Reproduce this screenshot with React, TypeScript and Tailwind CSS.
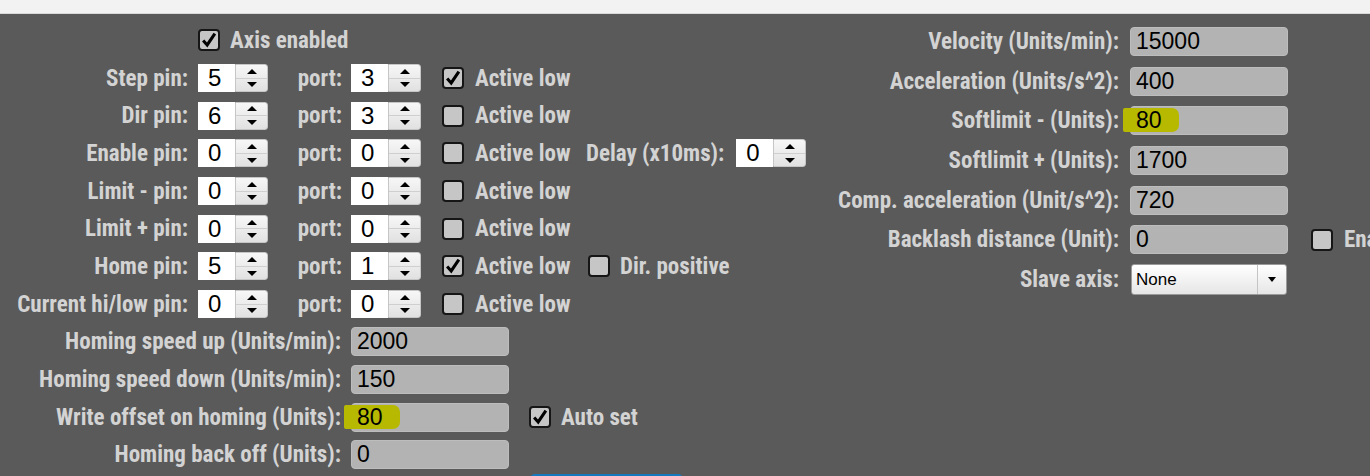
import React from "react";

const LABEL =
  "font-['Roboto_Condensed','Liberation_Sans_Narrow','Open_Sans','Noto_Sans',sans-serif] font-stretch-[75%] font-bold text-[23px] leading-none text-[#d3d3d3] whitespace-nowrap";
const VALUE = "font-['Liberation_Sans',Arial,sans-serif] text-[23px] leading-none text-black";

function Check({ checked }: { checked?: boolean }) {
  return (
    <div className="flex h-[22px] w-[22px] shrink-0 items-center justify-center rounded-[4px] border-2 border-[#161616] bg-[#c6c6c6]">
      {checked && (
        <svg viewBox="0 0 20 20" className="h-[18px] w-[18px]">
          <path d="M3.5 10.5 L8 15.5 L16.5 3" fill="none" stroke="#000" strokeWidth="3.4" strokeLinejoin="miter" />
        </svg>
      )}
    </div>
  );
}

function Spin({ value }: { value: string }) {
  return (
    <div className="flex h-[28px] shrink-0">
      <div className="flex w-[37px] items-center bg-white pl-[10px] font-['Liberation_Sans',Arial,sans-serif] text-[24px] leading-none text-black">
        {value}
      </div>
      <div className="flex w-[33px] flex-col rounded-r-[3px] border border-[#c6c6c6] bg-linear-to-b from-[#f7f7f7] to-[#e1e1e1]">
        <div className="flex flex-1 items-center justify-center border-b border-[#cfcfcf]">
          <div className="h-0 w-0 border-x-[5px] border-b-[5px] border-x-transparent border-b-black" />
        </div>
        <div className="flex flex-1 items-center justify-center">
          <div className="h-0 w-0 border-x-[5px] border-t-[5px] border-x-transparent border-t-black" />
        </div>
      </div>
    </div>
  );
}

function Field({ value, highlight }: { value: string; highlight?: boolean }) {
  return (
    <div className="relative flex h-[29px] w-[158px] shrink-0 items-center rounded-[4px] border border-[#bdbdbd] bg-[#b3b3b3] pl-[5px]">
      {highlight && (
        <span className="absolute left-[-8px] top-[1px] h-[24px] w-[56px] rounded-r-[7px] rounded-l-[2px] bg-[#b7b900]" />
      )}
      <span className={`relative ${VALUE}`}>{value}</span>
    </div>
  );
}

type PinRow = {
  label: string;
  pin: string;
  port: string;
  low: boolean;
  extra?: "delay" | "dir";
};

const pins: PinRow[] = [
  { label: "Step pin:", pin: "5", port: "3", low: true },
  { label: "Dir pin:", pin: "6", port: "3", low: false },
  { label: "Enable pin:", pin: "0", port: "0", low: false, extra: "delay" },
  { label: "Limit - pin:", pin: "0", port: "0", low: false },
  { label: "Limit + pin:", pin: "0", port: "0", low: false },
  { label: "Home pin:", pin: "5", port: "1", low: true, extra: "dir" },
  { label: "Current hi/low pin:", pin: "0", port: "0", low: false },
];

const homing = [
  { label: "Homing speed up (Units/min):", value: "2000" },
  { label: "Homing speed down (Units/min):", value: "150" },
  { label: "Write offset on homing (Units):", value: "80", highlight: true, auto: true },
  { label: "Homing back off (Units):", value: "0" },
];

const motion = [
  { label: "Velocity (Units/min):", value: "15000" },
  { label: "Acceleration (Units/s^2):", value: "400" },
  { label: "Softlimit - (Units):", value: "80", highlight: true },
  { label: "Softlimit + (Units):", value: "1700" },
  { label: "Comp. acceleration (Unit/s^2):", value: "720" },
  { label: "Backlash distance (Unit):", value: "0", enable: true },
];

export default function App() {
  return (
    <div className="flex h-[476px] w-[1370px] flex-col overflow-hidden bg-[#5a5a5a]">
      <div className="h-[14px] shrink-0 border-b border-[#d9d9d9] bg-[#f2f2f2]" />
      <div className="flex">
        {/* left column: pins and homing */}
        <div className="w-[830px] shrink-0 pt-[7.5px]">
          <div className="flex h-[37.7px] items-center pl-[198px]">
            <Check checked />
            <span className={`ml-[10px] ${LABEL}`}>Axis enabled</span>
          </div>
          {pins.map((row) => (
            <div key={row.label} className="flex h-[37.7px] items-center">
              <span className={`w-[188px] shrink-0 text-right ${LABEL}`}>{row.label}</span>
              <div className="ml-[10px]">
                <Spin value={row.pin} />
              </div>
              <span className={`w-[74px] shrink-0 text-right ${LABEL}`}>port:</span>
              <div className="ml-[9px]">
                <Spin value={row.port} />
              </div>
              <div className="ml-[21px] flex w-[144px] shrink-0 items-center">
                <Check checked={row.low} />
                <span className={`ml-[11px] ${LABEL}`}>Active low</span>
              </div>
              {row.extra === "delay" && (
                <>
                  <span className={LABEL}>Delay (x10ms):</span>
                  <div className="ml-[12px]">
                    <Spin value="0" />
                  </div>
                </>
              )}
              {row.extra === "dir" && (
                <div className="ml-[2px] flex items-center">
                  <Check />
                  <span className={`ml-[10px] ${LABEL}`}>Dir. positive</span>
                </div>
              )}
            </div>
          ))}
          {homing.map((row) => (
            <div key={row.label} className="flex h-[37.7px] items-center">
              <span className={`w-[341px] shrink-0 text-right ${LABEL}`}>{row.label}</span>
              <div className="ml-[10px]">
                <Field value={row.value} highlight={row.highlight} />
              </div>
              {row.auto && (
                <div className="ml-[20px] flex items-center">
                  <Check checked />
                  <span className={`ml-[10px] ${LABEL}`}>Auto set</span>
                </div>
              )}
            </div>
          ))}
          <div className="ml-[530px] h-[30px] w-[153px] rounded-t-[5px] bg-[#1779bd]" />
        </div>

        {/* right column: motion settings */}
        <div className="shrink-0 pt-[8px]">
          {motion.map((row) => (
            <div key={row.label} className="flex h-[39.6px] items-center">
              <span className={`w-[289px] shrink-0 text-right ${LABEL}`}>{row.label}</span>
              <div className="ml-[11px]">
                <Field value={row.value} highlight={row.highlight} />
              </div>
              {row.enable && (
                <div className="ml-[23px] flex items-center">
                  <Check />
                  <span className={`ml-[11px] ${LABEL}`}>Enabled</span>
                </div>
              )}
            </div>
          ))}
          <div className="flex h-[39.6px] items-center">
            <span className={`w-[289px] shrink-0 text-right ${LABEL}`}>Slave axis:</span>
            <div className="ml-[12px] flex h-[31px] w-[156px] items-stretch rounded-[3px] border border-[#9a9a9a] bg-linear-to-b from-white to-[#e6e6e6]">
              <span className="flex flex-1 items-center pl-[4px] font-['Liberation_Sans',Arial,sans-serif] text-[17px] leading-none text-black">
                None
              </span>
              <div className="flex w-[29px] items-center justify-center border-l border-[#c4c4c4]">
                <div className="h-0 w-0 border-x-[4px] border-t-[5px] border-x-transparent border-t-black" />
              </div>
            </div>
          </div>
        </div>
      </div>
    </div>
  );
}
